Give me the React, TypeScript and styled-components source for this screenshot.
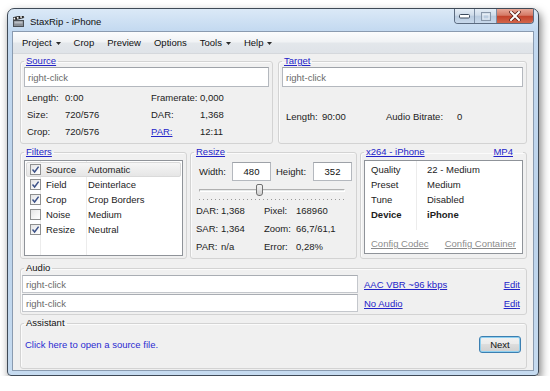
import React from "react"
import styled, { createGlobalStyle } from "styled-components"

const GlobalStyle = createGlobalStyle`
  html, body {
    margin: 0;
    background: #fff;
  }
  body {
    font-family: "Liberation Sans", Arial, sans-serif;
    font-size: 9.5px;
    color: #1c1c1c;
  }
  * {
    box-sizing: border-box;
  }
`

const menuItems = [
  { label: "Project", arrow: true },
  { label: "Crop" },
  { label: "Preview" },
  { label: "Options" },
  { label: "Tools", arrow: true },
  { label: "Help", arrow: true },
]

const filters = [
  { on: true, name: "Source", value: "Automatic" },
  { on: true, name: "Field", value: "Deinterlace" },
  { on: true, name: "Crop", value: "Crop Borders" },
  { on: false, name: "Noise", value: "Medium" },
  { on: true, name: "Resize", value: "Neutral" },
]

const codec = [
  { name: "Quality", value: "22 - Medium" },
  { name: "Preset", value: "Medium" },
  { name: "Tune", value: "Disabled" },
  { name: "Device", value: "iPhone", bold: true },
]

export default function App() {
  return (
    <>
      <GlobalStyle />
      <Page>
        <Window>
          <TitleBar>
            <TitleLeft>
              <ClapperIcon />
              <Title>StaxRip - iPhone</Title>
            </TitleLeft>
            <CaptionButtons>
              <CaptionButton>
                <MinGlyph />
              </CaptionButton>
              <CaptionButton $wide>
                <MaxGlyph />
              </CaptionButton>
              <CloseButton>
                <CloseGlyph />
              </CloseButton>
            </CaptionButtons>
          </TitleBar>

          <Client>
            <MenuBar>
              {menuItems.map((m) => (
                <MenuItem key={m.label}>
                  {m.label}
                  {m.arrow && <MenuArrow />}
                </MenuItem>
              ))}
            </MenuBar>

            <Body>
              <TopRow>
                <Group>
                  <Legend>
                    <Link>Source</Link>
                  </Legend>
                  <TextBox>right-click</TextBox>
                  <InfoGrid $cols="38px 86px 49px 1fr">
                    <span>Length:</span>
                    <span>0:00</span>
                    <span>Framerate:</span>
                    <span>0,000</span>
                    <span>Size:</span>
                    <span>720/576</span>
                    <span>DAR:</span>
                    <span>1,368</span>
                    <span>Crop:</span>
                    <span>720/576</span>
                    <Link>PAR:</Link>
                    <span>12:11</span>
                  </InfoGrid>
                </Group>

                <Group>
                  <Legend>
                    <Link>Target</Link>
                  </Legend>
                  <TextBox>right-click</TextBox>
                  <TargetInfo>
                    <InfoGrid $cols="36px 64px 71px 1fr" $pad={4}>
                      <span>Length:</span>
                      <span>90:00</span>
                      <span>Audio Bitrate:</span>
                      <span>0</span>
                    </InfoGrid>
                  </TargetInfo>
                </Group>
              </TopRow>

              <MiddleRow>
                <Group>
                  <Legend>
                    <Link>Filters</Link>
                  </Legend>
                  <FilterList>
                    {filters.map((f, i) => (
                      <FilterRow key={f.name} $selected={i === 0}>
                        <CheckCell>
                          <CheckBox $checked={f.on}>
                            {f.on && (
                              <svg width="9" height="9" viewBox="0 0 9 9">
                                <path
                                  d="M1.5 4.6 L3.6 7 L7.6 1.6"
                                  fill="none"
                                  stroke="#3d5288"
                                  strokeWidth="1.5"
                                />
                              </svg>
                            )}
                          </CheckBox>
                        </CheckCell>
                        <FilterName>{f.name}</FilterName>
                        <span>{f.value}</span>
                      </FilterRow>
                    ))}
                  </FilterList>
                </Group>

                <Group>
                  <Legend>
                    <Link>Resize</Link>
                  </Legend>
                  <SizeRow>
                    <SizeLabel $w={33}>Width:</SizeLabel>
                    <NumberBox>480</NumberBox>
                    <SizeLabel $w={37}>Height:</SizeLabel>
                    <NumberBox>352</NumberBox>
                  </SizeRow>
                  <Slider>
                    <SliderTrack>
                      <SliderThumb style={{ left: "39%" }} />
                    </SliderTrack>
                    <SliderTicks />
                  </Slider>
                  <ResizeGrid>
                    <span>DAR:</span>
                    <span>1,368</span>
                    <span>Pixel:</span>
                    <span>168960</span>
                    <span>SAR:</span>
                    <span>1,364</span>
                    <span>Zoom:</span>
                    <span>66,7/61,1</span>
                    <span>PAR:</span>
                    <span>n/a</span>
                    <span>Error:</span>
                    <span>0,28%</span>
                  </ResizeGrid>
                </Group>

                <Group>
                  <WideLegend>
                    <Link>x264 - iPhone</Link>
                    <Link>MP4</Link>
                  </WideLegend>
                  <CodecPanel>
                    <CodecTable>
                      {codec.map((c) => (
                        <CodecRow key={c.name} $bold={c.bold}>
                          <span>{c.name}</span>
                          <span>{c.value}</span>
                        </CodecRow>
                      ))}
                    </CodecTable>
                    <CodecLinks>
                      <GrayLink>Config Codec</GrayLink>
                      <GrayLink>Config Container</GrayLink>
                    </CodecLinks>
                  </CodecPanel>
                </Group>
              </MiddleRow>

              <Group>
                <Legend>Audio</Legend>
                <AudioGrid>
                  <AudioBox>right-click</AudioBox>
                  <Link>AAC VBR ~96 kbps</Link>
                  <Link>Edit</Link>
                  <AudioBox>right-click</AudioBox>
                  <Link>No Audio</Link>
                  <Link>Edit</Link>
                </AudioGrid>
              </Group>

              <AssistantGroup>
                <Legend>Assistant</Legend>
                <AssistantRow>
                  <PlainLink>Click here to open a source file.</PlainLink>
                  <Button>Next</Button>
                </AssistantRow>
              </AssistantGroup>
            </Body>
          </Client>
        </Window>
      </Page>
    </>
  )
}

function ClapperIcon() {
  return (
    <svg width="12" height="11" viewBox="0 0 12 11">
      <rect x="0.5" y="4.5" width="10" height="6" fill="#8a8f96" stroke="#4a4f55" />
      <rect x="1.5" y="5.5" width="8" height="2" fill="#b9bec4" />
      <g transform="rotate(-14 1 4)">
        <rect x="0.5" y="1.5" width="10.5" height="2.6" fill="#fff" stroke="#333" strokeWidth="0.8" />
        <rect x="2.5" y="1.5" width="1.8" height="2.6" fill="#222" />
        <rect x="6" y="1.5" width="1.8" height="2.6" fill="#222" />
        <rect x="9.3" y="1.5" width="1.5" height="2.6" fill="#222" />
      </g>
    </svg>
  )
}

function MinGlyph() {
  return (
    <svg width="11" height="6" viewBox="0 0 11 6">
      <rect x="0.5" y="1.5" width="10" height="3.5" rx="1" fill="#fff" stroke="#3c4a5c" />
    </svg>
  )
}

function MaxGlyph() {
  return (
    <svg width="10" height="9" viewBox="0 0 10 9">
      <rect x="0.5" y="0.5" width="9" height="8" fill="none" stroke="#8897aa" />
      <rect x="2" y="2.5" width="6" height="4.5" fill="none" stroke="#e6edf5" />
    </svg>
  )
}

function CloseGlyph() {
  return (
    <svg width="12" height="10" viewBox="0 0 12 10">
      <path
        d="M2 1 L10 9 M10 1 L2 9"
        stroke="#5a2018"
        strokeWidth="3.6"
        strokeLinecap="square"
      />
      <path d="M2 1 L10 9 M10 1 L2 9" stroke="#fff" strokeWidth="2" strokeLinecap="square" />
    </svg>
  )
}

function MenuArrow() {
  return (
    <ArrowSvg width="5" height="3" viewBox="0 0 5 3">
      <path d="M0 0 H5 L2.5 3 Z" fill="#2a2a2a" />
    </ArrowSvg>
  )
}

const Page = styled.div`
  padding: 8px 0 0 7px;
`

const Window = styled.div`
  width: 532px;
  height: 368px;
  display: flex;
  flex-direction: column;
  padding: 0 4px 4px 4px;
  border: 1px solid #3f4a57;
  border-radius: 7px 7px 4px 4px;
  background: linear-gradient(180deg, #dbe9f7 0%, #c3d9f0 22px, #bcd3eb 60%, #c6dbf0 100%);
  box-shadow: 2px 4px 9px rgba(0, 0, 0, 0.5);
`

const TitleBar = styled.div`
  height: 22px;
  display: flex;
  justify-content: space-between;
  align-items: flex-start;
`

const TitleLeft = styled.div`
  display: flex;
  align-items: center;
  gap: 5px;
  height: 22px;
  padding: 2px 0 0 1px;
`

const Title = styled.span`
  font-size: 9.5px;
  color: #111;
`

const CaptionButtons = styled.div`
  display: flex;
  height: 15px;
  border: 1px solid #5b6b80;
  border-top: none;
  border-radius: 0 0 4px 4px;
  overflow: hidden;
`

const CaptionButton = styled.div<{ $wide?: boolean }>`
  width: ${(p) => (p.$wide ? 22 : 20)}px;
  display: flex;
  align-items: center;
  justify-content: center;
  background: linear-gradient(180deg, #e4edf6 0%, #cfdcea 45%, #b9cbdf 50%, #c8d9ec 100%);
  border-right: 1px solid #7d8ea4;
`

const CloseButton = styled.div`
  width: 36px;
  display: flex;
  align-items: center;
  justify-content: center;
  background: linear-gradient(180deg, #e8a999 0%, #d57a66 45%, #c2432c 52%, #d3654a 100%);
`

const Client = styled.div`
  flex: 1;
  display: flex;
  flex-direction: column;
  border: 1px solid #8a9bb0;
  background: #f0f0f0;
`

const MenuBar = styled.div`
  height: 22px;
  display: flex;
  align-items: center;
  padding-left: 3px;
  border-bottom: 1px solid #d5d8dc;
  background: linear-gradient(180deg, #fbfcfd 0%, #f1f3f5 45%, #e3e7eb 55%, #dfe3e8 100%);
`

const MenuItem = styled.div`
  display: flex;
  align-items: center;
  padding: 0 6px;
  margin-right: 1px;
  font-size: 9.5px;
  color: #111;
`

const ArrowSvg = styled.svg`
  margin-left: 4px;
  margin-top: 1px;
`

const Body = styled.div`
  display: flex;
  flex-direction: column;
  gap: 4px;
  padding: 2px 6px 0 7px;
`

const TopRow = styled.div`
  display: grid;
  grid-template-columns: 253px 1fr;
  column-gap: 5px;
  height: 88px;
`

const MiddleRow = styled.div`
  display: grid;
  grid-template-columns: 167px 167px 1fr;
  column-gap: 3px;
  height: 112px;
  margin-top: -1px;
`

const Group = styled.fieldset`
  margin: 0;
  min-width: 0;
  display: flex;
  flex-direction: column;
  padding: 0 3px 2px 3px;
  border: 1px solid #d3d3d3;
  border-radius: 3px;
  box-shadow: inset 1px 1px 0 #fbfbfb;
`

const Legend = styled.legend`
  padding: 0 2px;
  line-height: 10px;
  color: #111;
`

const WideLegend = styled(Legend)`
  width: 100%;
  display: flex;
  justify-content: space-between;
  padding-right: 10px;
`

const Link = styled.span`
  color: #2323c8;
  text-decoration: underline;
  white-space: nowrap;
`

const PlainLink = styled.span`
  color: #2b2bd0;
`

const GrayLink = styled.span`
  color: #8c8c8c;
  text-decoration: underline;
`

const TextBox = styled.div`
  height: 20px;
  margin-top: 1px;
  display: flex;
  align-items: center;
  padding-left: 3px;
  background: #fff;
  border: 1px solid #b4b8be;
  border-top-color: #9ea2a8;
  color: #6a6a6a;
`

const InfoGrid = styled.div<{ $cols: string; $pad?: number }>`
  display: grid;
  grid-template-columns: ${(p) => p.$cols};
  grid-auto-rows: 17px;
  align-items: center;
  margin-top: 2px;
  padding-left: ${(p) => p.$pad ?? 3}px;
  white-space: nowrap;
`

const TargetInfo = styled.div`
  flex: 1;
  display: flex;
  align-items: center;
  padding-top: 2px;
`

const FilterList = styled.div`
  flex: 1;
  margin-top: 3px;
  padding-top: 1px;
  background-color: #fff;
  background-image: linear-gradient(
    to right,
    transparent 15px,
    #ececec 15px,
    #ececec 16px,
    transparent 16px,
    transparent 61px,
    #ececec 61px,
    #ececec 62px,
    transparent 62px
  );
  border: 1px solid #8f9399;
`

const FilterRow = styled.div<{ $selected?: boolean }>`
  height: 15px;
  margin: 0 1px;
  display: grid;
  grid-template-columns: 15px 46px 1fr;
  align-items: center;
  border: 1px solid ${(p) => (p.$selected ? "#dadada" : "transparent")};
  border-radius: 2px;
  background: ${(p) =>
    p.$selected ? "linear-gradient(180deg, #f6f6f6 0%, #e6e6e6 100%)" : "transparent"};
`

const CheckCell = styled.div`
  display: flex;
  justify-content: center;
  padding-left: 1px;
`

const CheckBox = styled.div<{ $checked?: boolean }>`
  width: 11px;
  height: 11px;
  display: flex;
  align-items: center;
  justify-content: center;
  border: 1px solid #8e8f8f;
  background: linear-gradient(135deg, #e4e4e4 0%, #f6f6f6 60%, #fff 100%);
`

const FilterName = styled.span`
  padding-left: 4px;
`

const SizeRow = styled.div`
  display: flex;
  align-items: center;
  height: 20px;
  margin-top: 4px;
  padding-left: 5px;
`

const SizeLabel = styled.span<{ $w: number }>`
  width: ${(p) => p.$w}px;
  flex: none;
  &:nth-of-type(2) {
    margin-left: 5px;
  }
`

const NumberBox = styled.div`
  width: 39px;
  height: 19px;
  display: flex;
  align-items: center;
  justify-content: center;
  background: #fff;
  border: 1px solid #b4b8be;
  border-top-color: #9ea2a8;
  color: #111;
`

const Slider = styled.div`
  margin: 2px 8px 0 5px;
  height: 18px;
  display: flex;
  flex-direction: column;
  justify-content: flex-end;
`

const SliderTrack = styled.div`
  position: relative;
  height: 3px;
  margin-bottom: 7px;
  background: #e7eaea;
  border: 1px solid #b0b0b0;
  border-bottom-color: #fff;
  border-right-color: #fff;
`

const SliderThumb = styled.div`
  position: absolute;
  top: -6px;
  width: 7px;
  height: 12px;
  border: 1px solid #707070;
  border-radius: 2px 2px 3px 3px;
  background: linear-gradient(180deg, #f4f4f4 0%, #e0e0e0 55%, #cfcfcf 100%);
`

const SliderTicks = styled.div`
  height: 1px;
  margin-bottom: 1px;
  background: repeating-linear-gradient(to right, #9a9a9a 0 1px, transparent 1px 4px);
`

const ResizeGrid = styled.div`
  display: grid;
  grid-template-columns: 25px 43px 32px 1fr;
  grid-auto-rows: 18px;
  align-items: center;
  padding-left: 2px;
  white-space: nowrap;
`

const CodecPanel = styled.div`
  flex: 1;
  margin: 3px 0 2px;
  display: flex;
  flex-direction: column;
  background: #fff;
  border: 1px solid #8f9399;
`

const CodecTable = styled.div`
  flex: 1;
  padding-top: 1px;
  margin-bottom: 8px;
  background: linear-gradient(
    to right,
    transparent 51px,
    #ececec 51px,
    #ececec 52px,
    transparent 52px
  );
`

const CodecRow = styled.div<{ $bold?: boolean }>`
  height: 15px;
  display: grid;
  grid-template-columns: 56px 1fr;
  align-items: center;
  padding-left: 6px;
  font-weight: ${(p) => (p.$bold ? 700 : 400)};
`

const CodecLinks = styled.div`
  display: flex;
  justify-content: space-between;
  padding: 0 6px 4px 6px;
`

const AudioGrid = styled.div`
  display: grid;
  grid-template-columns: 336px 1fr auto;
  grid-auto-rows: 18px;
  row-gap: 1px;
  column-gap: 6px;
  align-items: center;
  margin-top: 2px;
  padding: 0 3px 0 0;
  margin-left: -2px;
`

const AudioBox = styled.div`
  height: 18px;
  display: flex;
  align-items: center;
  padding-left: 3px;
  background: #fff;
  border: 1px solid #c4c7cc;
  border-top-color: #a9adb3;
  color: #6a6a6a;
`

const AssistantGroup = styled(Group)`
  height: 51px;
  margin-top: -1px;
`

const AssistantRow = styled.div`
  flex: 1;
  display: flex;
  align-items: center;
  justify-content: space-between;
  padding: 8px 2px 0 1px;
`

const Button = styled.div`
  width: 42px;
  height: 17px;
  display: flex;
  align-items: center;
  justify-content: center;
  border: 1px solid #3c7fb1;
  border-radius: 3px;
  box-shadow: inset 0 0 0 1px #8fd0f0;
  background: linear-gradient(180deg, #f2f2f2 0%, #ebebeb 45%, #dddddd 50%, #cfcfcf 100%);
  color: #111;
`
